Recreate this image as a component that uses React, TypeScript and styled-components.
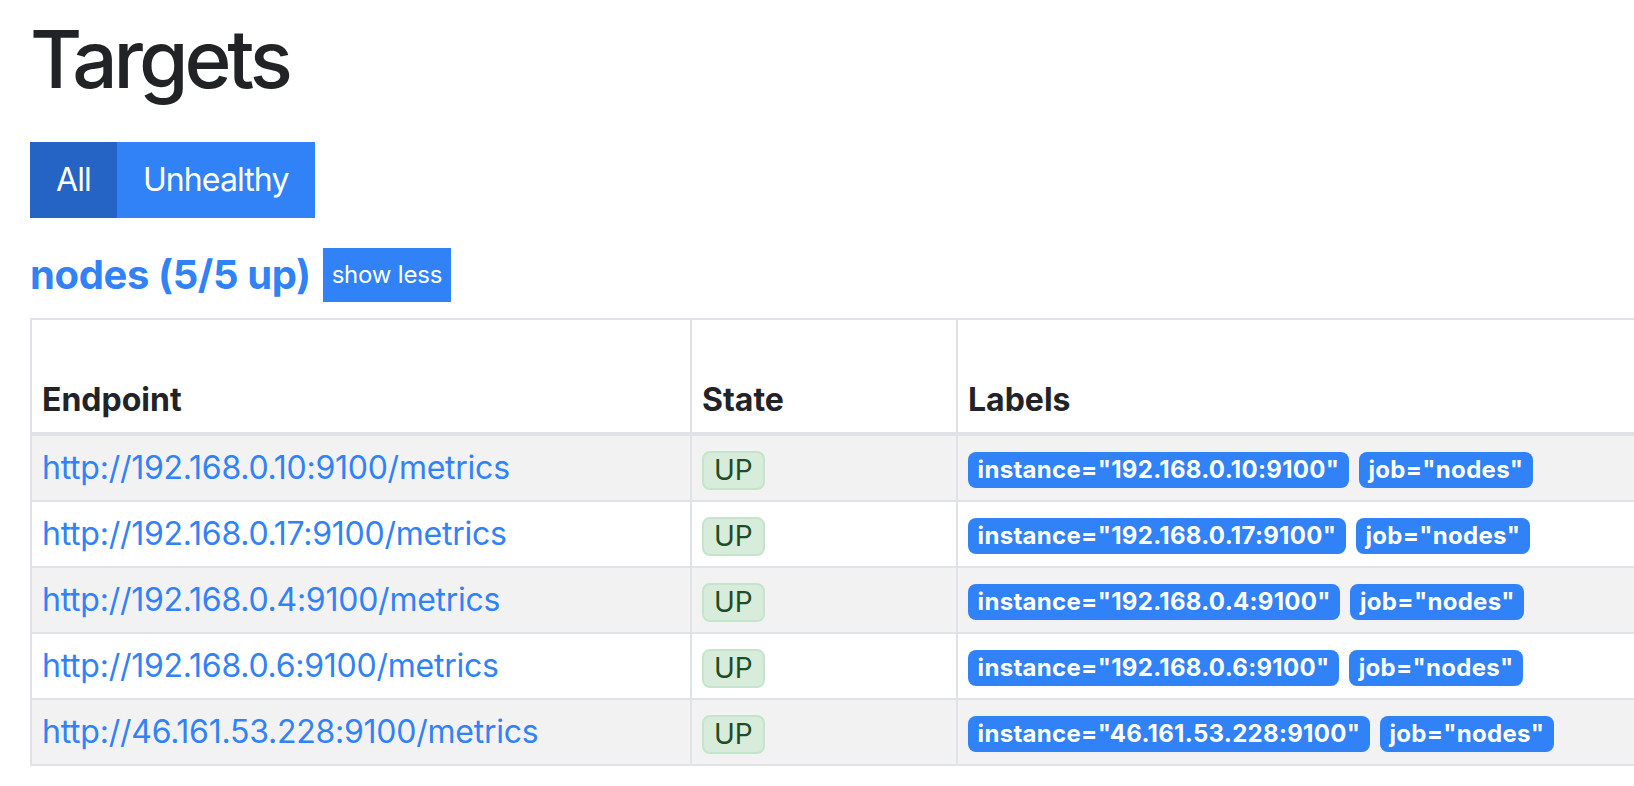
import React from 'react'
import styled, { createGlobalStyle } from 'styled-components'

const GlobalStyle = createGlobalStyle`
  html, body {
    margin: 0;
    padding: 0;
    background: #fff;
    overflow: hidden;
  }

  body {
    font-family: Inter, "Liberation Sans", Arial, sans-serif;
    color: #212327;
  }
`

type Health = 'up' | 'down'

interface Target {
  endpoint: string
  health: Health
  labels: Record<string, string>
}

const targets: Target[] = [
  { endpoint: 'http://192.168.0.10:9100/metrics', health: 'up', labels: { instance: '192.168.0.10:9100', job: 'nodes' } },
  { endpoint: 'http://192.168.0.17:9100/metrics', health: 'up', labels: { instance: '192.168.0.17:9100', job: 'nodes' } },
  { endpoint: 'http://192.168.0.4:9100/metrics', health: 'up', labels: { instance: '192.168.0.4:9100', job: 'nodes' } },
  { endpoint: 'http://192.168.0.6:9100/metrics', health: 'up', labels: { instance: '192.168.0.6:9100', job: 'nodes' } },
  { endpoint: 'http://46.161.53.228:9100/metrics', health: 'up', labels: { instance: '46.161.53.228:9100', job: 'nodes' } },
]

const App = () => {
  const upCount = targets.filter(t => t.health === 'up').length

  return (
    <Page>
      <GlobalStyle />
      <Title>Targets</Title>

      <ButtonGroup>
        <FilterButton active type="button">All</FilterButton>
        <FilterButton type="button">Unhealthy</FilterButton>
      </ButtonGroup>

      <PoolHeader>
        <PoolTitle href="#nodes">{`nodes (${upCount}/${targets.length} up)`}</PoolTitle>
        <ToggleButton type="button">show less</ToggleButton>
      </PoolHeader>

      <Table>
        <colgroup>
          <col style={{ width: 660 }} />
          <col style={{ width: 266 }} />
          <col style={{ width: 1000 }} />
        </colgroup>
        <thead>
          <tr>
            <HeadCell>Endpoint</HeadCell>
            <HeadCell>State</HeadCell>
            <HeadCell>Labels</HeadCell>
          </tr>
        </thead>
        <tbody>
          {targets.map((target, i) => (
            <Row key={target.endpoint} striped={i % 2 === 0}>
              <Cell>
                <EndpointLink href={target.endpoint}>{target.endpoint}</EndpointLink>
              </Cell>
              <Cell>
                <StateBadge>{target.health.toUpperCase()}</StateBadge>
              </Cell>
              <Cell>
                {Object.entries(target.labels).map(([name, value]) => (
                  <LabelBadge key={name}>{`${name}="${value}"`}</LabelBadge>
                ))}
              </Cell>
            </Row>
          ))}
        </tbody>
      </Table>
    </Page>
  )
}

export default App

const Page = styled.div`
  padding: 11px 0 0 30px;
  width: 1604px;
  overflow: hidden;
`

const Title = styled.h1`
  margin: 0 0 35px;
  font-size: 80px;
  line-height: 96px;
  font-weight: 500;
  letter-spacing: -4.1px;
`

const ButtonGroup = styled.div`
  display: inline-flex;
  margin-bottom: 30px;
`

const FilterButton = styled.button<{ active?: boolean }>`
  font-family: inherit;
  font-size: 32px;
  line-height: 48px;
  letter-spacing: -0.9px;
  padding: 12px 24px;
  border: 2px solid ${p => (p.active ? '#2563c4' : '#3182f6')};
  background: ${p => (p.active ? '#2563c4' : '#3182f6')};
  color: #fff;
  border-radius: 0;
  cursor: pointer;
`

const PoolHeader = styled.div`
  display: flex;
  align-items: center;
  gap: 12px;
  margin-bottom: 16px;
`

const PoolTitle = styled.a`
  font-size: 40px;
  line-height: 48px;
  font-weight: 700;
  letter-spacing: -0.4px;
  color: #3182f6;
  text-decoration: none;
`

const ToggleButton = styled.button`
  font-family: inherit;
  font-size: 24px;
  line-height: 36px;
  letter-spacing: -0.2px;
  padding: 9px 9px;
  border: none;
  border-radius: 0;
  background: #3182f6;
  color: #fff;
  cursor: pointer;
`

const Table = styled.table`
  border-collapse: collapse;
  table-layout: fixed;
  width: 1926px;
  border: 2px solid #dfe2e6;
`

const HeadCell = styled.th`
  height: 96px;
  padding: 8px 10px;
  text-align: left;
  vertical-align: bottom;
  font-size: 32px;
  line-height: 48px;
  font-weight: 700;
  border: 2px solid #dfe2e6;
  border-bottom-width: 4px;
`

const Row = styled.tr<{ striped: boolean }>`
  background: ${p => (p.striped ? '#f2f2f2' : '#fff')};
`

const Cell = styled.td`
  padding: 8px 10px;
  vertical-align: top;
  font-size: 32px;
  line-height: 48px;
  border: 2px solid #dfe2e6;
  white-space: nowrap;
`

const EndpointLink = styled.a`
  color: #3182f6;
  text-decoration: none;
  letter-spacing: -0.25px;
`

const StateBadge = styled.span`
  display: inline-block;
  font-size: 28px;
  line-height: 28px;
  padding: 3.5px 10px;
  border: 2px solid #c6e4cc;
  border-radius: 8px;
  background: #d8ecdc;
  color: #1e4d25;
  vertical-align: middle;
`

const LabelBadge = styled.span`
  display: inline-block;
  margin-right: 10px;
  padding: 6px 9.6px;
  font-size: 24px;
  line-height: 24px;
  font-weight: 700;
  letter-spacing: 0.3px;
  color: #fff;
  background: #3182f6;
  border-radius: 8px;
  vertical-align: middle;
`
